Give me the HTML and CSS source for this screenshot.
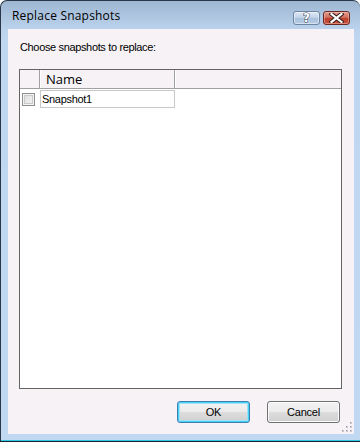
FILE: index.html
```html
<!DOCTYPE html>
<html>
<head>
<meta charset="utf-8">
<link rel="stylesheet" href="styles.css">
</head>
<body>
<div class="window">
  <div class="titlebar">
    <span class="title">Replace Snapshots</span>
    <div class="caption-buttons">
      <div class="cap-btn help"><span class="qmark">?</span></div>
      <div class="cap-btn close">
        <svg width="15" height="10" viewBox="0 0 15 10">
          <path d="M2.5 1 L12.5 9 M12.5 1 L2.5 9" stroke="#3a2320" stroke-width="4.2" stroke-linecap="square" fill="none"/>
          <path d="M2.5 1 L12.5 9 M12.5 1 L2.5 9" stroke="#ffffff" stroke-width="2.2" stroke-linecap="square" fill="none"/>
        </svg>
      </div>
    </div>
  </div>
  <div class="frame">
    <div class="client">
      <div class="label">Choose snapshots to replace:</div>
      <div class="listview">
        <div class="lv-header">
          <div class="hcol hcol-check"></div>
          <div class="hcol hcol-name">Name</div>
          <div class="hcol hcol-rest"></div>
        </div>
        <div class="lv-row">
          <div class="cell cell-check"><span class="checkbox"></span></div>
          <div class="cell cell-name">Snapshot1</div>
        </div>
      </div>
      <div class="buttons">
        <div class="btn btn-default"><span>OK</span></div>
        <div class="btn">Cancel</div>
      </div>
      <div class="grip">
        <svg width="10" height="10" viewBox="0 0 10 10">
          <rect x="8" y="0" width="2" height="2" fill="#c9c6cc"/>
          <rect x="4" y="4" width="2" height="2" fill="#c9c6cc"/>
          <rect x="8" y="4" width="2" height="2" fill="#c9c6cc"/>
          <rect x="0" y="8" width="2" height="2" fill="#c9c6cc"/>
          <rect x="4" y="8" width="2" height="2" fill="#c9c6cc"/>
          <rect x="8" y="8" width="2" height="2" fill="#c9c6cc"/>
          <rect x="8" y="0" width="1" height="1" fill="#9a97a0"/>
          <rect x="4" y="4" width="1" height="1" fill="#9a97a0"/>
          <rect x="8" y="4" width="1" height="1" fill="#9a97a0"/>
          <rect x="0" y="8" width="1" height="1" fill="#9a97a0"/>
          <rect x="4" y="8" width="1" height="1" fill="#9a97a0"/>
          <rect x="8" y="8" width="1" height="1" fill="#9a97a0"/>
        </svg>
      </div>
    </div>
  </div>
</div>
</body>
</html>
```

FILE: styles.css
```css
html, body {
  margin: 0;
  padding: 0;
  background: #ffffff;
}

.window {
  width: 360px;
  height: 442px;
  box-sizing: border-box;
  border-left: 1px solid #2a3646;
  border-top: 1px solid #2a3646;
  border-bottom: 1px solid #1b2430;
  border-radius: 7px 7px 0 0;
  background: linear-gradient(to bottom, #9db6d2 0px, #aec6e0 16px, #bad2ec 28px, #bfd7f1 40px, #c0d8f1 100%);
  box-shadow: inset 0 -1px 0 #2fc9e6;
  display: flex;
  flex-direction: column;
  overflow: hidden;
}

.titlebar {
  height: 28px;
  flex: none;
  display: flex;
  align-items: flex-start;
  justify-content: space-between;
}

.title {
  margin-left: 11px;
  margin-top: 7px;
  font-family: "Open Sans", "Noto Sans", sans-serif;
  font-size: 12px;
  letter-spacing: 0.2px;
  line-height: 16px;
  color: #000000;
}

.caption-buttons {
  display: flex;
  gap: 3px;
  margin-top: 10px;
  margin-right: 10px;
}

.cap-btn {
  height: 14px;
  box-sizing: border-box;
  border-radius: 3px;
  display: flex;
  align-items: center;
  justify-content: center;
}

.help {
  width: 27px;
  border: 1px solid #6d83a0;
  background: linear-gradient(to bottom, #dce7f3 0%, #c3d5ea 45%, #a9c1dc 50%, #b6cce5 100%);
  box-shadow: inset 0 0 0 1px rgba(255,255,255,0.45);
}

.qmark {
  font-family: "DejaVu Sans", sans-serif;
  font-weight: bold;
  font-size: 12px;
  line-height: 12px;
  color: #ffffff;
  -webkit-text-stroke: 1px #3c4a5c;
  paint-order: stroke fill;
}

.close {
  width: 27px;
  border: 1px solid #6a2a24;
  background: linear-gradient(to bottom, #e39a8c 0%, #d2705f 45%, #bd3e2c 50%, #c9523e 100%);
  box-shadow: inset 0 0 0 1px rgba(255,220,210,0.4);
}

.frame {
  flex: 1;
  display: flex;
  padding: 0 6px 7px 7px;
}

.client {
  flex: 1;
  background: #f6f2f5;
  position: relative;
  padding: 11px 12px 0 11px;
  display: flex;
  flex-direction: column;
}

.label {
  font-family: "Liberation Sans", Arial, sans-serif;
  font-size: 11px;
  letter-spacing: -0.35px;
  line-height: 14px;
  color: #000000;
  margin-left: 1px;
}

.listview {
  margin-top: 15px;
  width: 323px;
  height: 320px;
  box-sizing: border-box;
  border: 1px solid #646464;
  background: #ffffff;
}

.lv-header {
  display: flex;
  height: 19px;
  box-sizing: border-box;
  background: #f6f2f5;
  border-bottom: 1px solid #a0a0a0;
}

.hcol {
  box-sizing: border-box;
  height: 18px;
}

.hcol-check {
  width: 20px;
  border-right: 1px solid #a0a0a0;
}

.hcol-name {
  width: 135px;
  border-left: 1px solid #ffffff;
  border-right: 1px solid #a0a0a0;
  padding-left: 5px;
  font-family: "Open Sans", "Noto Sans", sans-serif;
  font-size: 13px;
  line-height: 18px;
  color: #000000;
}

.hcol-rest {
  flex: 1;
  border-left: 1px solid #ffffff;
}

.lv-row {
  display: flex;
  height: 18px;
  margin-top: 1px;
}

.cell {
  box-sizing: border-box;
  height: 18px;
}

.cell-check {
  width: 20px;
  display: flex;
  align-items: center;
  padding-left: 2px;
}

.checkbox {
  width: 13px;
  height: 13px;
  box-sizing: border-box;
  border: 1px solid #8e8f8f;
  background: linear-gradient(135deg, #d9dada 0%, #e9e9e9 50%, #f4f4f4 100%);
  box-shadow: inset 0 0 0 1px #f4f4f4, inset 0 0 0 2px #c9caca;
}

.cell-name {
  width: 135px;
  border: 1px solid #c8c8c8;
  padding-left: 1px;
  font-family: "Liberation Sans", Arial, sans-serif;
  font-size: 11px;
  letter-spacing: -0.3px;
  line-height: 16px;
  color: #000000;
}

.buttons {
  display: flex;
  justify-content: flex-end;
  gap: 17px;
  margin-top: 12px;
  margin-right: 2px;
}

.btn {
  width: 73px;
  height: 22px;
  box-sizing: border-box;
  border: 1px solid #707070;
  border-radius: 3px;
  background: linear-gradient(to bottom, #f2f2f2 0%, #ebebeb 50%, #dddddd 51%, #cfcfcf 100%);
  box-shadow: inset 0 0 0 1px #fbfbfb;
  font-family: "Liberation Sans", Arial, sans-serif;
  font-size: 11px;
  letter-spacing: -0.2px;
  line-height: 20px;
  text-align: center;
  color: #000000;
}

.btn-default {
  border-color: #3c7fb1;
  box-shadow: inset 0 0 0 1px #48d0f6, inset 0 0 0 2px #9ee2f7;
}

.grip {
  position: absolute;
  right: 2px;
  bottom: 2px;
  width: 10px;
  height: 10px;
}

.grip svg {
  display: block;
}
```
